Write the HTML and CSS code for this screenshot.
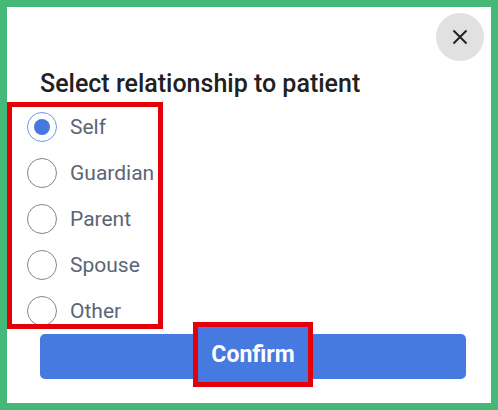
FILE: index.html
```html
<!DOCTYPE html>
<html>
<head>
<meta charset="utf-8">
<link rel="stylesheet" href="styles.css">
</head>
<body>
<div class="frame">
  <div class="modal">
    <div class="header">
      <button class="close" aria-label="Close">
        <svg width="16" height="16" viewBox="0 0 16 16"><path d="M1.5 1.5 L14.5 14.5 M14.5 1.5 L1.5 14.5" stroke="#222" stroke-width="2" fill="none"/></svg>
      </button>
    </div>
    <h2 class="title">Select relationship to patient</h2>
    <ul class="options">
      <li class="option"><span class="radio checked"></span><span class="label">Self</span></li>
      <li class="option"><span class="radio"></span><span class="label">Guardian</span></li>
      <li class="option"><span class="radio"></span><span class="label">Parent</span></li>
      <li class="option"><span class="radio"></span><span class="label">Spouse</span></li>
      <li class="option"><span class="radio"></span><span class="label">Other</span></li>
    </ul>
    <button class="confirm"><span class="confirm-label">Confirm</span></button>
  </div>
  <div class="mark-list"></div>
</div>
</body>
</html>
```
FILE: styles.css
```css
* { box-sizing: border-box; }
html, body { margin: 0; padding: 0; background: #fff; }
body { font-family: Roboto, "Noto Sans", Arial, sans-serif; }

.frame {
  position: relative;
  width: 498px;
  height: 410px;
  border: 7px solid #44b978;
  background: #fff;
}

.modal {
  display: flex;
  flex-direction: column;
  padding: 0 7px 0 20px;
}

.header {
  display: flex;
  justify-content: flex-end;
  padding-top: 6px;
}

.close {
  width: 48px;
  height: 48px;
  border-radius: 50%;
  border: none;
  background: #e1e1e1;
  display: flex;
  align-items: center;
  justify-content: center;
  padding: 0;
}

.title {
  margin: 9px 0 6px 13px;
  font-size: 25px;
  line-height: 28px;
  font-weight: 500;
  color: #212121;
}

.options {
  list-style: none;
  margin: 0;
  padding: 0;
}

.option {
  height: 46px;
  display: flex;
  align-items: center;
  gap: 13px;
}

.radio {
  width: 30px;
  height: 30px;
  border-radius: 50%;
  border: 1.6px solid #7d8897;
  display: flex;
  align-items: center;
  justify-content: center;
  flex: none;
}

.radio.checked { border-color: #6d98ea; }
.radio.checked::after {
  content: "";
  width: 16px;
  height: 16px;
  border-radius: 50%;
  background: #4678e0;
}

.label {
  font-size: 21px;
  color: #5b6576;
}

.confirm {
  margin: 0 18px 0 13px;
  height: 45px;
  border: none;
  border-radius: 5px;
  background: #467ae0;
  display: flex;
  align-items: center;
  justify-content: center;
  padding: 0;
  font-family: inherit;
}

.confirm-label {
  height: 65px;
  margin-bottom: 4px;
  border: 5px solid #e30008;
  background: #467ae0;
  padding: 0 13px;
  display: flex;
  align-items: center;
  font-size: 23px;
  font-weight: 700;
  color: #fff;
}

.mark-list {
  position: absolute;
  left: 0;
  top: 95px;
  width: 156px;
  height: 227px;
  border: 5px solid #e30008;
}
```
